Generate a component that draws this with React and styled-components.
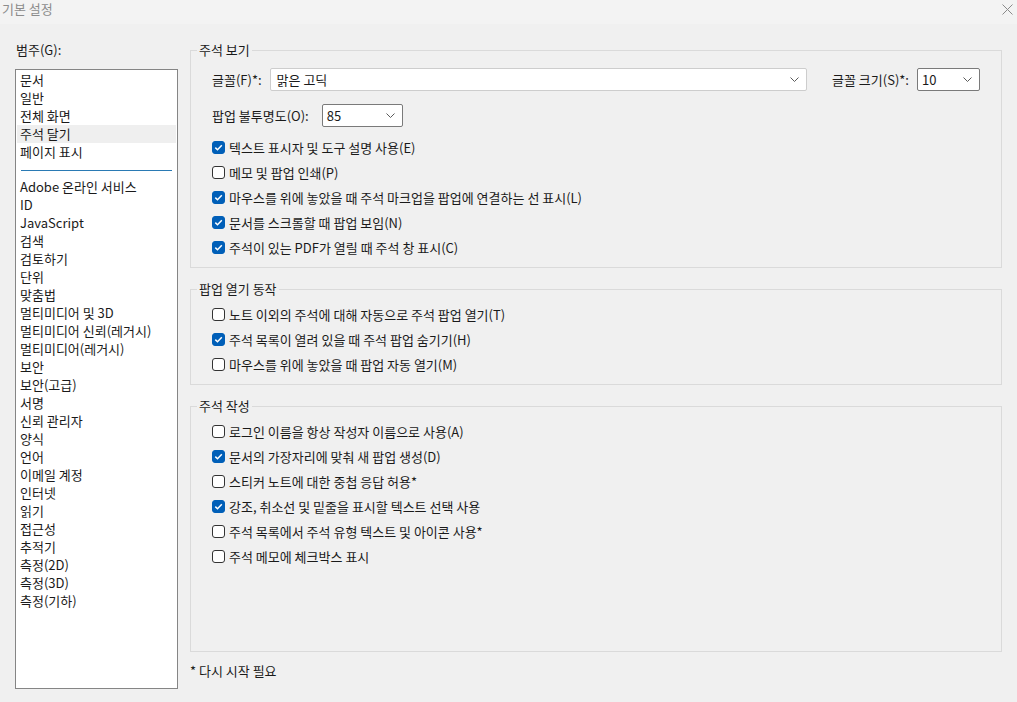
import React from 'react';
import styled, { createGlobalStyle } from 'styled-components';

const topCategories = ['문서', '일반', '전체 화면', '주석 달기', '페이지 표시'];
const moreCategories = [
  'Adobe 온라인 서비스',
  'ID',
  'JavaScript',
  '검색',
  '검토하기',
  '단위',
  '맞춤법',
  '멀티미디어 및 3D',
  '멀티미디어 신뢰(레거시)',
  '멀티미디어(레거시)',
  '보안',
  '보안(고급)',
  '서명',
  '신뢰 관리자',
  '양식',
  '언어',
  '이메일 계정',
  '인터넷',
  '읽기',
  '접근성',
  '추적기',
  '측정(2D)',
  '측정(3D)',
  '측정(기하)',
];

const viewOptions = [
  { label: '텍스트 표시자 및 도구 설명 사용(E)', checked: true },
  { label: '메모 및 팝업 인쇄(P)', checked: false },
  { label: '마우스를 위에 놓았을 때 주석 마크업을 팝업에 연결하는 선 표시(L)', checked: true },
  { label: '문서를 스크롤할 때 팝업 보임(N)', checked: true },
  { label: '주석이 있는 PDF가 열릴 때 주석 창 표시(C)', checked: true },
];

const popupOptions = [
  { label: '노트 이외의 주석에 대해 자동으로 주석 팝업 열기(T)', checked: false },
  { label: '주석 목록이 열려 있을 때 주석 팝업 숨기기(H)', checked: true },
  { label: '마우스를 위에 놓았을 때 팝업 자동 열기(M)', checked: false },
];

const createOptions = [
  { label: '로그인 이름을 항상 작성자 이름으로 사용(A)', checked: false },
  { label: '문서의 가장자리에 맞춰 새 팝업 생성(D)', checked: true },
  { label: '스티커 노트에 대한 중첩 응답 허용*', checked: false },
  { label: '강조, 취소선 및 밑줄을 표시할 텍스트 선택 사용', checked: true },
  { label: '주석 목록에서 주석 유형 텍스트 및 아이콘 사용*', checked: false },
  { label: '주석 메모에 체크박스 표시', checked: false },
];

function Chevron() {
  return (
    <svg width="9" height="5" viewBox="0 0 9 5">
      <path d="M0.5 0.5 L4.5 4.5 L8.5 0.5" fill="none" stroke="#5a5a5a" strokeWidth="1" />
    </svg>
  );
}

function Dropdown({ value, width, $light }) {
  return (
    <Select $width={width} $light={$light}>
      <SelectValue>{value}</SelectValue>
      <Chevron />
    </Select>
  );
}

function Check({ label, checked }) {
  return (
    <CheckRow>
      <Box $checked={checked}>
        {checked && (
          <svg width="13" height="13" viewBox="0 0 13 13">
            <path d="M3.3 6.6 L5.5 8.7 L9.8 4.3" fill="none" stroke="#fff" strokeWidth="1.5" />
          </svg>
        )}
      </Box>
      <span>{label}</span>
    </CheckRow>
  );
}

export default function App() {
  return (
    <>
      <GlobalStyle />
      <Window>
        <TitleBar>
          <Title>기본 설정</Title>
          <Close>
            <svg width="11" height="11" viewBox="0 0 11 11">
              <path d="M0.5 0.5 L10.5 10.5 M10.5 0.5 L0.5 10.5" stroke="#8a8a8a" strokeWidth="1" />
            </svg>
          </Close>
        </TitleBar>
        <Body>
          <Sidebar>
            <SideLabel>범주(G):</SideLabel>
            <CategoryList>
              {topCategories.map((c) => (
                <CategoryItem key={c} $active={c === '주석 달기'}>
                  {c}
                </CategoryItem>
              ))}
              <Divider />
              {moreCategories.map((c) => (
                <CategoryItem key={c}>{c}</CategoryItem>
              ))}
            </CategoryList>
          </Sidebar>
          <Main>
            <Group>
              <Legend>주석 보기</Legend>
              <GroupBody $top={10}>
                <FieldRow>
                  <span>글꼴(F)*:</span>
                  <Dropdown value="맑은 고딕" $light />
                  <SizeLabel>글꼴 크기(S)*:</SizeLabel>
                  <Dropdown value="10" width={63} />
                </FieldRow>
                <FieldRow $above={13} $space={13}>
                  <span>팝업 불투명도(O):</span>
                  <Dropdown value="85" width={81} />
                </FieldRow>
                <CheckList $top={8}>
                  {viewOptions.map((o) => (
                    <Check key={o.label} {...o} />
                  ))}
                </CheckList>
              </GroupBody>
            </Group>
            <Group>
              <Legend>팝업 열기 동작</Legend>
              <GroupBody $top={5}>
                <CheckList>
                  {popupOptions.map((o) => (
                    <Check key={o.label} {...o} />
                  ))}
                </CheckList>
              </GroupBody>
            </Group>
            <Group $grow>
              <Legend>주석 작성</Legend>
              <GroupBody $top={5}>
                <CheckList>
                  {createOptions.map((o) => (
                    <Check key={o.label} {...o} />
                  ))}
                </CheckList>
              </GroupBody>
            </Group>
            <Footer>* 다시 시작 필요</Footer>
          </Main>
        </Body>
      </Window>
    </>
  );
}

const GlobalStyle = createGlobalStyle`
  html, body {
    margin: 0;
    padding: 0;
    background: #f0f0f0;
  }
  body {
    font-family: "Noto Sans CJK KR", "Noto Sans", sans-serif;
    font-size: 13px;
    color: #1a1a1a;
  }
`;

const Window = styled.div`
  width: 1017px;
  height: 702px;
  display: flex;
  flex-direction: column;
  overflow: hidden;
`;

const TitleBar = styled.div`
  height: 24px;
  flex-shrink: 0;
  background: #f3f3f3;
  display: flex;
  align-items: flex-start;
  justify-content: space-between;
`;

const Title = styled.div`
  padding: 1px 0 0 2px;
  line-height: 16px;
  color: #8c8c8c;
`;

const Close = styled.div`
  padding: 4px 4px 0 0;
  display: flex;
`;

const Body = styled.div`
  display: flex;
  gap: 12px;
  padding: 18px 0 0 15px;
`;

const Sidebar = styled.div`
  width: 163px;
  display: flex;
  flex-direction: column;
`;

const SideLabel = styled.div`
  line-height: 16px;
  padding-left: 1px;
  margin-bottom: 11px;
`;

const CategoryList = styled.div`
  height: 620px;
  box-sizing: border-box;
  border: 1px solid #858585;
  background: #fff;
  padding: 1px 1px 0;
`;

const CategoryItem = styled.div`
  height: 18px;
  line-height: 18px;
  padding-left: 3px;
  white-space: nowrap;
  background: ${(p) => (p.$active ? '#efefef' : 'transparent')};
`;

const Divider = styled.div`
  height: 17px;
  box-sizing: border-box;
  padding-top: 9px;
  margin: 0 4px;
  &::after {
    content: '';
    display: block;
    height: 1px;
    background: #2a7ab4;
  }
`;

const Main = styled.div`
  width: 812px;
  height: 637px;
  display: flex;
  flex-direction: column;
  gap: 13px;
`;

const Group = styled.fieldset`
  margin: 0;
  padding: 0;
  min-width: 0;
  border: 1px solid #dadada;
  flex: ${(p) => (p.$grow ? '1' : 'none')};
`;

const Legend = styled.legend`
  margin-left: 6px;
  padding: 0 2px;
  line-height: 16px;
`;

const GroupBody = styled.div`
  display: flex;
  flex-direction: column;
  padding: ${(p) => p.$top}px 21px 7px 21px;
`;

const FieldRow = styled.div`
  display: flex;
  align-items: center;
  gap: ${(p) => p.$space || 8}px;
  margin-top: ${(p) => p.$above || 0}px;
`;

const SizeLabel = styled.span`
  margin-left: 17px;
`;

const Select = styled.div`
  height: 23px;
  box-sizing: border-box;
  flex: ${(p) => (p.$width ? `0 0 ${p.$width}px` : '1')};
  display: flex;
  align-items: center;
  justify-content: space-between;
  padding: 0 7px 0 ${(p) => (p.$light ? 6 : 4)}px;
  background: #fff;
  border: 1px solid ${(p) => (p.$light ? '#cdcdcd' : '#7a7a7a')};
  border-radius: 2px;
`;

const SelectValue = styled.span`
  line-height: 16px;
`;

const CheckList = styled.div`
  display: flex;
  flex-direction: column;
  margin-top: ${(p) => p.$top || 0}px;
`;

const CheckRow = styled.label`
  height: 25px;
  display: flex;
  align-items: center;
  gap: 4px;
  white-space: nowrap;
`;

const Box = styled.span`
  width: 13px;
  height: 13px;
  box-sizing: border-box;
  border-radius: 3px;
  flex-shrink: 0;
  display: flex;
  background: ${(p) => (p.$checked ? '#005fb8' : '#fff')};
  border: 1px solid ${(p) => (p.$checked ? '#005fb8' : '#333')};
  svg {
    margin: -1px;
  }
`;

const Footer = styled.div`
  line-height: 16px;
  margin-top: -2px;
`;
